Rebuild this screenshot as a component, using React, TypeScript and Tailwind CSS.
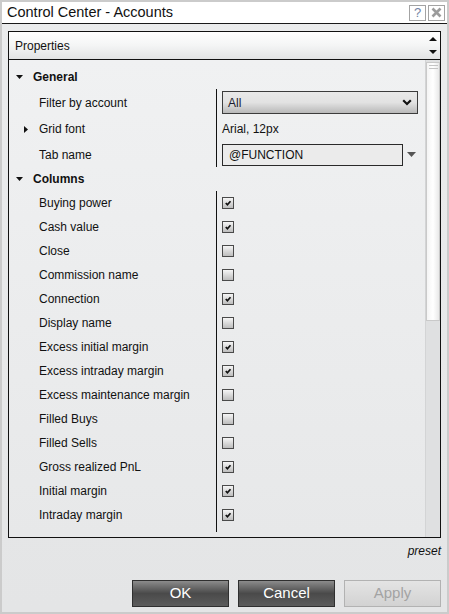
import React from "react";

const font = { fontFamily: '"Liberation Sans", Arial, sans-serif' };

const columns: [string, boolean][] = [
  ["Buying power", true],
  ["Cash value", true],
  ["Close", false],
  ["Commission name", false],
  ["Connection", true],
  ["Display name", false],
  ["Excess initial margin", true],
  ["Excess intraday margin", true],
  ["Excess maintenance margin", false],
  ["Filled Buys", false],
  ["Filled Sells", false],
  ["Gross realized PnL", true],
  ["Initial margin", true],
  ["Intraday margin", true],
];

function DownTri() {
  return (
    <svg width="7" height="4" viewBox="0 0 7 4" className="block">
      <path d="M0 0H7L3.5 4Z" fill="#111" />
    </svg>
  );
}

function Checkbox({ checked }: { checked: boolean }) {
  return (
    <span className="flex h-[12px] w-[12px] items-center justify-center border border-[#4a4a4a] bg-gradient-to-b from-[#f6f6f6] to-[#bdbdbd]">
      {checked && (
        <svg width="8" height="8" viewBox="0 0 8 8" className="block">
          <path d="M1.8 4L3.4 5.8L6.5 2.2" fill="none" stroke="#111" strokeWidth="1.7" />
        </svg>
      )}
    </span>
  );
}

function GroupHeader({ label }: { label: string }) {
  return (
    <div className="flex h-[24px] items-center">
      <span className="w-[24px] pl-[7px]">
        <DownTri />
      </span>
      <span className="text-[12px] font-bold text-[#111]">{label}</span>
    </div>
  );
}

function Row({
  label,
  height,
  children,
  expander,
}: {
  label: string;
  height: string;
  children: React.ReactNode;
  expander?: boolean;
}) {
  return (
    <div className={`flex ${height}`}>
      <div className="flex w-[207px] items-center pl-[15px] text-[12px] text-[#111]">
        <span className="w-[15px]">
          {expander && (
            <svg width="4" height="7" viewBox="0 0 4 7" className="block">
              <path d="M0 0L4 3.5L0 7Z" fill="#111" />
            </svg>
          )}
        </span>
        {label}
      </div>
      <div className="flex flex-1 items-center border-l border-[#111] pl-[5px]">{children}</div>
    </div>
  );
}

export default function App() {
  return (
    <div
      className="flex h-[614px] w-[449px] flex-col border-2 border-[#cbcbcb] bg-gradient-to-b from-[#ebeced] to-[#e4e5e6]"
      style={font}
    >
      <div className="flex h-[22px] shrink-0 items-center justify-between border-b border-[#1a1a1a] bg-white pl-[5px] pr-[2px]">
        <span className="text-[14.5px] text-[#111]">Control Center - Accounts</span>
        <div className="flex gap-[2px]">
          <span className="flex h-[16px] w-[17px] items-center justify-center border border-[#a3a3a3] bg-white text-[13px] leading-none text-[#7284a4]">
            ?
          </span>
          <span className="flex h-[16px] w-[17px] items-center justify-center border border-[#a3a3a3] bg-white">
            <svg width="11" height="11" viewBox="0 0 11 11" className="block">
              <path d="M1.5 1.5L9.5 9.5M9.5 1.5L1.5 9.5" stroke="#9c9c9c" strokeWidth="2.6" />
            </svg>
          </span>
        </div>
      </div>

      <div className="mx-[6px] mt-[7px] flex h-[507px] flex-col border border-[#111]">
        <div className="flex h-[28px] shrink-0 items-center justify-between border-b border-[#111] bg-gradient-to-b from-white via-[#f4f5f5] to-[#e2e3e4] pl-[6px] pr-[3px]">
          <span className="text-[12px] text-[#111]">Properties</span>
          <div className="flex flex-col gap-[9px]">
            <svg width="8" height="4" viewBox="0 0 8 4" className="block">
              <path d="M0 4H8L4 0Z" fill="#111" />
            </svg>
            <svg width="8" height="4" viewBox="0 0 8 4" className="block">
              <path d="M0 0H8L4 4Z" fill="#111" />
            </svg>
          </div>
        </div>

        <div className="flex min-h-0 flex-1 bg-gradient-to-b from-[#f0f1f2] to-[#e7e8e9]">
          <div className="min-w-0 flex-1 overflow-hidden pt-[5px]">
            <GroupHeader label="General" />
            <Row label="Filter by account" height="h-[27px]">
              <div className="flex h-[23px] w-[196px] items-center justify-between border border-[#3c3c3c] bg-gradient-to-b from-[#e9e9e9] via-[#e2e2e2] to-[#b9b9b9] pl-[5px] pr-[5px]">
                <span className="text-[12px] text-[#1b1b30]">All</span>
                <svg width="10" height="7" viewBox="0 0 10 7" className="block">
                  <path d="M1.2 1.2L5 5L8.8 1.2" fill="none" stroke="#111" strokeWidth="2.2" />
                </svg>
              </div>
            </Row>
            <Row label="Grid font" height="h-[26px]" expander>
              <span className="text-[12px] text-[#111]">Arial, 12px</span>
            </Row>
            <Row label="Tab name" height="h-[25px]">
              <div className="flex items-center gap-[4px]">
                <div className="flex h-[22px] w-[181px] items-center border border-[#2a2a2a] bg-[#ebebeb] pl-[6px] text-[12px] text-[#111]">
                  @FUNCTION
                </div>
                <svg width="9" height="5" viewBox="0 0 9 5" className="block">
                  <path d="M0 0H9L4.5 5Z" fill="#555" />
                </svg>
              </div>
            </Row>
            <GroupHeader label="Columns" />
            {columns.map(([label, checked]) => (
              <Row key={label} label={label} height="h-[24px]">
                <Checkbox checked={checked} />
              </Row>
            ))}
            <div className="flex h-[5px]">
              <div className="w-[207px]" />
              <div className="border-l border-[#111]" />
            </div>
          </div>

          <div className="w-[15px] shrink-0 border-l border-[#d3d4d5] bg-[#dfe0e1] pt-[2px]">
            <div className="flex h-[259px] flex-col items-center border border-[#c9c9c9] bg-gradient-to-r from-[#f4f4f4] via-white to-[#e9e9e9] pt-[1px]">
              <span className="mt-[1px] h-px w-[9px] bg-[#c4c4c4]" />
              <span className="mt-[2px] h-px w-[9px] bg-[#c4c4c4]" />
            </div>
          </div>
        </div>
      </div>

      <div className="mx-[6px] mt-[6px] flex h-[14px] items-center justify-end">
        <span className="text-[12px] italic text-[#111]">preset</span>
      </div>

      <div className="mx-[6px] mt-[22px] flex justify-end gap-[9px]">
        <button className="flex h-[27px] w-[97px] items-center justify-center border border-[#2f2f2f] bg-gradient-to-b from-[#8c8c8c] via-[#4a4a4a] to-[#5c5c5c] text-[15px] text-white">
          OK
        </button>
        <button className="flex h-[27px] w-[97px] items-center justify-center border border-[#2f2f2f] bg-gradient-to-b from-[#8c8c8c] via-[#4a4a4a] to-[#5c5c5c] text-[15px] text-white">
          Cancel
        </button>
        <button className="flex h-[27px] w-[97px] items-center justify-center border border-[#b2b2b2] bg-gradient-to-b from-[#e4e4e4] to-[#d2d2d2] text-[15px] text-[#a3a3a3]">
          Apply
        </button>
      </div>
    </div>
  );
}
